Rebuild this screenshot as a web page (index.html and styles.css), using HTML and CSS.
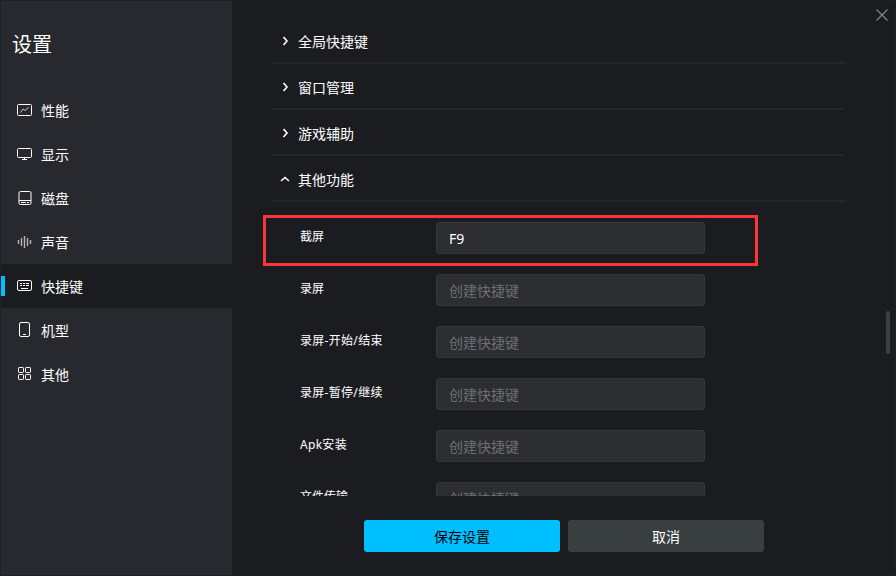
FILE: index.html
```html
<!DOCTYPE html>
<html lang="zh-CN">
<head>
<meta charset="utf-8">
<title>设置</title>
<link rel="stylesheet" href="styles.css">
</head>
<body>
<div class="window">
  <aside class="sidebar">
    <h1 class="title">设置</h1>
    <nav class="nav">
      <a class="nav-item"><svg class="icon" viewBox="0 0 16 16"><rect x="1.5" y="2.5" width="14" height="11" rx="1"/><path class="thin" d="M4.500 10.500L7 7l2 1.500L12.500 5.500"/></svg><span>性能</span></a>
      <a class="nav-item"><svg class="icon" viewBox="0 0 16 16"><rect x="1.500" y="2.500" width="14" height="9" rx="1"/><path d="M8.500 11.500v2M6 13.500h5"/></svg><span>显示</span></a>
      <a class="nav-item"><svg class="icon" viewBox="0 0 16 16"><rect x="3" y="1.500" width="12" height="13" rx="1.500"/><path d="M3 10.500h12M5 12.500h5M11 12.500h2"/></svg><span>磁盘</span></a>
      <a class="nav-item"><svg class="icon" viewBox="0 0 16 16"><path class="bars" d="M2.500 6v4M5.500 4v8M8.500 2v12M11.500 4v8M14.500 6v4"/></svg><span>声音</span></a>
      <a class="nav-item active"><svg class="icon" viewBox="0 0 16 16"><rect x="1.500" y="2.500" width="14" height="10" rx="1.500"/><path d="M4 5.500h2M7 5.500h2M10 5.500h3M4 7.500h2M7 7.500h2M10 7.500h3M5 10.500h7"/></svg><span>快捷键</span></a>
      <a class="nav-item"><svg class="icon" viewBox="0 0 16 16"><rect x="3.500" y=".5" width="10" height="14" rx="1.500"/><path d="M7 12.500h3"/></svg><span>机型</span></a>
      <a class="nav-item"><svg class="icon" viewBox="0 0 16 16"><rect x="2.500" y="1.500" width="5" height="5" rx=".7"/><rect x="9.500" y="1.500" width="5" height="5" rx=".7"/><rect x="2.500" y="8.500" width="5" height="5" rx=".7"/><rect x="9.500" y="8.500" width="5" height="5" rx=".7"/></svg><span>其他</span></a>
    </nav>
  </aside>
  <main class="main">
    <div class="scroll">
      <div class="section"><svg class="chev" viewBox="0 0 12 12"><path d="M4.500 2L8 6L4.500 10"/></svg><span>全局快捷键</span></div>
      <div class="section"><svg class="chev" viewBox="0 0 12 12"><path d="M4.500 2L8 6L4.500 10"/></svg><span>窗口管理</span></div>
      <div class="section"><svg class="chev" viewBox="0 0 12 12"><path d="M4.500 2L8 6L4.500 10"/></svg><span>游戏辅助</span></div>
      <div class="section"><svg class="chev" viewBox="0 0 12 12"><path d="M2 8L6 4.500L10 8"/></svg><span>其他功能</span></div>
      <div class="form">
        <div class="row marked"><span class="label">截屏</span><div class="field value">F9</div></div>
        <div class="row"><span class="label">录屏</span><div class="field">创建快捷键</div></div>
        <div class="row"><span class="label mixed">录屏-开始/结束</span><div class="field">创建快捷键</div></div>
        <div class="row"><span class="label mixed">录屏-暂停/继续</span><div class="field">创建快捷键</div></div>
        <div class="row"><span class="label mixed">Apk安装</span><div class="field">创建快捷键</div></div>
        <div class="row"><span class="label">文件传输</span><div class="field">创建快捷键</div></div>
      </div>
    </div>
    <footer class="actions">
      <button class="btn primary">保存设置</button>
      <button class="btn">取消</button>
    </footer>
    <svg class="close" viewBox="0 0 14 14"><path d="M1.500 1.500L12.500 12.500M12.500 1.500L1.500 12.500"/></svg>
    <div class="thumb"></div>
  </main>
</div>
</body>
</html>
```
FILE: styles.css
```css
*, *::after { box-sizing: border-box; }

body {
  margin: 0;
  font: 14px/20px "Noto Sans", "Noto Sans CJK SC", sans-serif;
  color: #fff;
  background: #1b1c1f;
}

svg { fill: none; stroke: #fff; flex: none; }

.window {
  display: flex;
  width: 896px;
  height: 576px;
  border: 1px solid #1a2129;
  background: #1b1c1f;
  overflow: hidden;
}

.sidebar { width: 231px; background: #28292e; }

.title {
  height: 87px;
  margin: 0;
  padding: 29px 0 0 11px;
  font-size: 20px;
  line-height: 30px;
  font-weight: 400;
}

.nav-item {
  display: flex;
  align-items: center;
  gap: 9px;
  height: 44px;
  padding-left: 15px;
  line-height: 22px;
}

.nav-item span { padding-top: 1px; }

.active {
  background: linear-gradient(#00bfff, #00bfff) 0 12px / 4px 20px no-repeat #1b1c1f;
}

.icon { width: 16px; height: 16px; }
.thin { stroke: #c4c4c6; }
.bars { stroke: #b4b4b6; stroke-width: 1.4; }

.main { position: relative; flex: 1; }

.scroll {
  height: 495px;
  padding: 17px 0 0 40px;
  overflow: hidden;
}

.section {
  display: flex;
  align-items: center;
  gap: 7px;
  width: 574px;
  height: 46px;
  padding: 2px 0 0 7px;
  border-bottom: 2px solid #242529;
}

.section span { padding-top: 1px; }

.chev { width: 12px; height: 12px; stroke-width: 1.6; }

.form { padding-top: 20px; }

.row {
  position: relative;
  display: flex;
  height: 32px;
  margin-bottom: 20px;
  padding-left: 28px;
}

.marked::after {
  content: "";
  position: absolute;
  left: -9px;
  top: -7px;
  width: 495px;
  height: 51px;
  border: 3px solid #ff3434;
}

.label { width: 136px; font-size: 12px; line-height: 30px; }
.mixed { letter-spacing: .3px; }

.field {
  width: 269px;
  height: 32px;
  padding: 1px 12px 0;
  border: 1px solid #37383c;
  border-radius: 3px;
  background: #2d2e32;
  color: #6c6f75;
  line-height: 30px;
}

.value { color: #fff; }

.actions { display: flex; gap: 8px; padding: 24px 0 0 132px; }

.btn {
  width: 196px;
  height: 32px;
  padding: 2px 0 0;
  border: 0;
  border-radius: 3px;
  background: #393e41;
  color: #fff;
  font: inherit;
}

.primary { background: #00bfff; color: #000; }

.close {
  position: absolute;
  top: 7px;
  right: 6px;
  width: 14px;
  height: 14px;
  stroke: #85868a;
  stroke-width: 1.2;
}

.thumb {
  position: absolute;
  top: 310px;
  right: 5px;
  width: 4px;
  height: 43px;
  border-radius: 2px;
  background: #3d3e42;
}
```
